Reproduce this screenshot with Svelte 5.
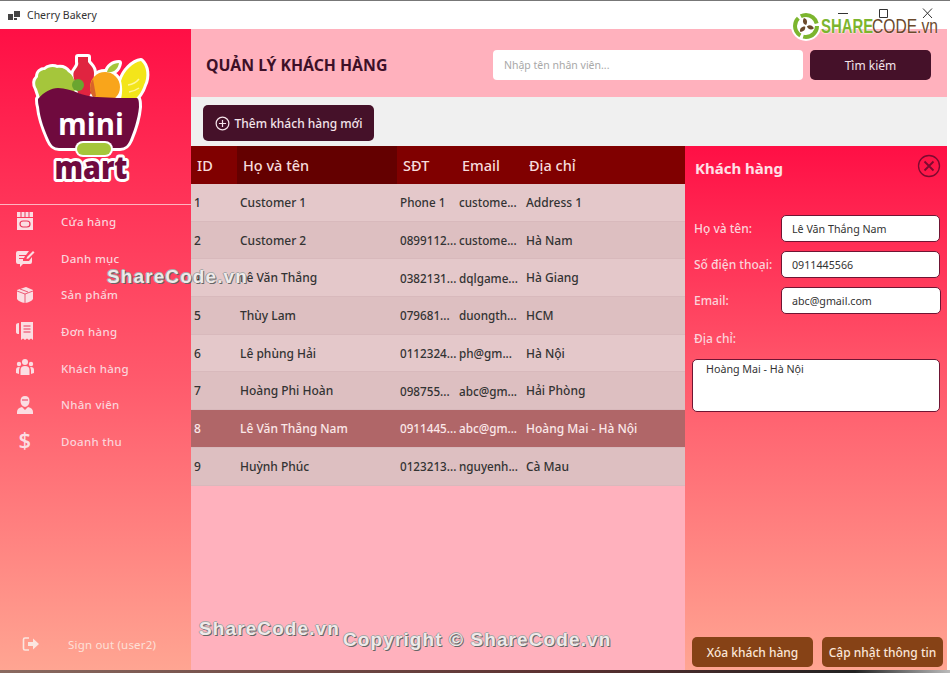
<script>
  const menu = [
    { label: "Cửa hàng", icon: "store" },
    { label: "Danh mục", icon: "edit" },
    { label: "Sản phẩm", icon: "box" },
    { label: "Đơn hàng", icon: "receipt" },
    { label: "Khách hàng", icon: "people" },
    { label: "Nhân viên", icon: "staff" },
    { label: "Doanh thu", icon: "dollar" }
  ];

  const customers = [
    ["1", "Customer 1", "Phone 1", "custome...", "Address 1"],
    ["2", "Customer 2", "0899112...", "custome...", "Hà Nam"],
    ["4", "Lê Văn Thắng", "0382131...", "dqlgame...", "Hà Giang"],
    ["5", "Thùy Lam", "079681...", "duongth...", "HCM"],
    ["6", "Lê phùng Hải", "0112324...", "ph@gm...", "Hà Nội"],
    ["7", "Hoàng Phi Hoàn", "098755...", "abc@gm...", "Hải Phòng"],
    ["8", "Lê Văn Thắng Nam", "0911445...", "abc@gm...", "Hoàng Mai - Hà Nội"],
    ["9", "Huỳnh Phúc", "0123213...", "nguyenh...", "Cà Mau"]
  ];
  const selectedId = "8";
  let address = "Hoàng Mai - Hà Nội";
</script>

<div class="window">
  <div class="titlebar">
    <div class="title">
      <svg width="13" height="11" viewBox="0 0 13 11"><path fill="#444" d="M0 4h5v6H0zM6 1h6v6H6zM6 8h3v2H6z" /></svg>
      <span>Cherry Bakery</span>
    </div>
    <div class="winbtns">
      <svg width="96" height="16" viewBox="0 0 96 16" fill="none" stroke="#333" stroke-width="1">
        <path d="M0 7.500h10" />
        <path d="M41.500 3.500h8v8h-8z" />
        <path d="M85 2.500l9 9.500M94 2.500l-9 9.500" />
      </svg>
    </div>
  </div>

  <div class="body">
    <aside class="sidebar">
      <div class="logo">
        <svg width="118" height="132" viewBox="0 0 118 132">
          <defs>
            <path id="lettuce" d="M5 36c-3-5-2-9 1-12 0-5 3-7 7-7 3-3 8-4 12-2 5-1 9 1 11 4 5 3 7 8 7 14l-1 10-20-2-14 4z" />
            <path id="bottle" d="M46 4h10v5c2 3 6 5 6 11 0 6-1 12-2 18l-4 8-10-6-4-14c-1-4-1-7 1-9 2-3 4-5 3-8z" />
            <circle id="orange" cx="73" cy="34" r="15" />
            <path id="leaf" d="M75 19c1-5 6-9 12-9-1 6-5 10-12 9z" />
            <path id="banana" d="M89 46c2-8 1-14 0-18 3-10 12-19 20-20 6 5 7 16 3 24-2 7-7 13-12 17z" />
            <path id="basket" d="M6 46c6-7 13-11 20-11 14 0 24 9 39 9 14 1 27 1 40 1 2 1 2 5 2 9-1 12-6 26-9 33-2 5-5 8-10 8H27c-5 0-8-3-10-8C13 78 8 66 7 54c-1-3-1-6-1-8z" />
          </defs>
          <g fill="#fff" stroke="#fff" stroke-width="6" stroke-linejoin="round">
            <use href="#lettuce" />
            <use href="#bottle" />
            <use href="#orange" />
            <use href="#leaf" />
            <use href="#banana" />
            <use href="#basket" />
          </g>
          <use href="#lettuce" fill="#a5c63b" />
          <use href="#bottle" fill="#e02440" />
          <circle cx="46" cy="32" r="6" fill="#6aa52f" />
          <use href="#orange" fill="#f9a51b" />
          <path d="M61 26a15 15 0 0 0 0 18l3-1z" fill="#d9642a" />
          <use href="#leaf" fill="#a5c63b" />
          <use href="#banana" fill="#f3e51a" />
          <path d="M96 32q7-1 11-6M97 39q6-1 10-4" fill="none" stroke="#fff59a" stroke-width="1.500" />
          <use href="#basket" fill="#6f0a3e" />
          <text x="59" y="82" textLength="66" lengthAdjust="spacingAndGlyphs" class="logo-mini">mini</text>
          <rect x="43" y="88" width="38" height="16" rx="8" fill="#fff" />
          <rect x="45" y="90" width="34" height="12" rx="6" fill="#a5c63b" />
          <text x="59" y="126" textLength="73" lengthAdjust="spacingAndGlyphs" class="logo-mart-edge">mart</text>
          <text x="59" y="126" textLength="73" lengthAdjust="spacingAndGlyphs" class="logo-mart">mart</text>
        </svg>
      </div>
      <hr />
      <nav>
        {#each menu as item}
          <div class="nav-item">
            <span class="nav-icon">
              <svg width="20" height="20" viewBox="0 0 20 20" fill="#fbdde2">
                {#if item.icon === "store"}
                  <path d="M2 1h16v5H2z" />
                  <path d="M2 7h16v12H2z" />
                  <rect x="5" y="10" width="10" height="6" rx="3" fill="none" stroke="#e9375a" stroke-width="1.200" />
                  <path d="M6 1v5M10 1v5M14 1v5" stroke="#e9375a" />
                {:else if item.icon === "edit"}
                  <path d="M1 5q0-2 2-2h11l-3 4H4v1h6L9 10H4v1h4v2h6l3-4v5q0 2-2 2H8l-3 3v-3H3q-2 0-2-2z" />
                  <path d="M12 9l6-6 1.500 1.500-6 6-2 .5z" />
                {:else if item.icon === "box"}
                  <path d="M2 5l9-3 7 3v9q-2 3-8 4-6-1-8-4z" />
                  <path d="M2 6l8 3v9M10 9l8-3M5 4l8 3" fill="none" stroke="#e9375a" stroke-width=".800" />
                {:else if item.icon === "receipt"}
                  <path d="M1 4q0-2 3-2v11q-3 0-3-2z" />
                  <path d="M6 1h12v18l-2-1.500-2 1.500-2-1.500-2 1.500-2-1.500-2 1.500z" />
                  <path d="M8.500 5h7M8.500 8h7M8.500 11h7" stroke="#e9375a" />
                {:else if item.icon === "people"}
                  <circle cx="10" cy="4" r="3" />
                  <circle cx="4" cy="6" r="2.200" />
                  <circle cx="16" cy="6" r="2.200" />
                  <path d="M5.500 17v-5q0-4 4.500-4t4.500 4v5z" />
                  <path d="M1 15v-3q0-3 3-3l1 .5q-1 1-1 3V16zM19 15v-3q0-3-3-3l-1 .5q1 1 1 3V16z" />
                {:else if item.icon === "staff"}
                  <path d="M10 1q4.500 0 4.500 5t-4.500 6q-4.500-1-4.500-6T10 1z" />
                  <path d="M2 19v-2q0-4 5-5l3 3 3-3q5 1 5 5v2z" />
                  <path d="M7 5h6" stroke="#e9375a" />
                {:else}
                  <text x="10" y="17" class="dollar">$</text>
                {/if}
              </svg>
            </span>
            <span>{item.label}</span>
          </div>
        {/each}
      </nav>
      <div class="signout">
        <svg width="18" height="16" viewBox="0 0 18 16" fill="none">
          <path d="M7 2H3q-1.500 0-1.500 1.500v9Q1.500 14 3 14h4" stroke="#fbe6e0" stroke-width="1.600" />
          <path fill="#fbe6e0" d="M6 6h5V2.500L17 8l-6 5.500V10H6z" />
        </svg>
        <span>Sign out (user2)</span>
      </div>
    </aside>

    <main class="content">
      <header class="head">
        <h1>QUẢN LÝ KHÁCH HÀNG</h1>
        <div class="search">
          <input placeholder="Nhập tên nhân viên..." />
          <button class="dark search-btn">Tìm kiếm</button>
        </div>
      </header>

      <div class="toolbar">
        <button class="dark add-btn">
          <svg width="15" height="15" viewBox="0 0 16 16" fill="none" stroke="#f5e4ea" stroke-width="1.300">
            <circle cx="8" cy="8" r="6.800" />
            <path d="M8 4.200v7.600M4.200 8h7.600" />
          </svg>
          Thêm khách hàng mới
        </button>
      </div>

      <div class="split">
        <section class="table">
          <div class="row thead">
            <div>ID</div>
            <div class="dark-col">Họ và tên</div>
            <div>SĐT</div>
            <div>Email</div>
            <div>Địa chỉ</div>
          </div>
          {#each customers as c, i}
            <div class="row tr" class:alt={i % 2 === 1} class:selected={c[0] === selectedId}>
              {#each c as cell}
                <div>{cell}</div>
              {/each}
            </div>
          {/each}
        </section>

        <section class="detail">
          <div class="detail-head">
            <h2>Khách hàng</h2>
            <svg width="24" height="24" viewBox="0 0 24 24" fill="none" stroke="#7d0a30" stroke-width="1.300">
              <circle cx="12" cy="12" r="10.500" />
              <path d="M7.500 7.500l9 9M16.500 7.500l-9 9" stroke-width="1.800" />
            </svg>
          </div>
          <div class="form">
            <label for="name">Họ và tên:</label>
            <input id="name" value="Lê Văn Thắng Nam" />
            <label for="phone">Số điện thoại:</label>
            <input id="phone" value="0911445566" />
            <label for="email">Email:</label>
            <input id="email" class="wide" value="abc@gmail.com" />
          </div>
          <label class="addr-label" for="addr">Địa chỉ:</label>
          <textarea id="addr" bind:value={address}></textarea>
          <div class="actions">
            <button class="brown">Xóa khách hàng</button>
            <button class="brown">Cập nhật thông tin</button>
          </div>
        </section>
      </div>
    </main>
    <div class="rightgap"></div>
  </div>

  <div class="bottomline"></div>

  <!-- stamped over the screenshot -->
  <div class="brand">
    <svg width="30" height="30" viewBox="0 0 30 30">
      <circle cx="15" cy="15" r="15" fill="#fff" />
      <circle cx="15" cy="15" r="11" fill="none" stroke="#7cb52e" stroke-width="4" stroke-dasharray="20 3.040" />
      <g fill="#6b4a2c">
        <path d="M15 14c-3-1-4-4-2-7 3 1 4 4 2 7z" />
        <path d="M15 14c-3-1-4-4-2-7 3 1 4 4 2 7z" transform="rotate(120 15 15)" />
        <path d="M15 14c-3-1-4-4-2-7 3 1 4 4 2 7z" transform="rotate(240 15 15)" />
      </g>
    </svg>
    <span class="b-green">SHARE</span><span class="b-brown">CODE.vn</span>
  </div>
  <div class="wm wm1">ShareCode.vn</div>
  <div class="wm wm2">ShareCode.vn</div>
  <div class="wm wm3">Copyright © ShareCode.vn</div>
</div>

<style>
  :global(body) {
    margin: 0;
    background: #fff;
  }

  .window {
    position: relative;
    width: 950px;
    height: 673px;
    overflow: hidden;
    display: flex;
    flex-direction: column;
    background: #fff;
    font-family: "Noto Sans", "Open Sans", sans-serif;
    font-size: 12px;
    box-sizing: border-box;
    border-top: 1px solid #777;
  }

  .titlebar {
    height: 28px;
    flex: none;
    display: flex;
    align-items: center;
    justify-content: space-between;
    padding: 0 16px 0 8px;
  }
  .title {
    display: flex;
    align-items: center;
    gap: 6px;
    font-size: 10.500px;
    color: #333;
  }
  .winbtns {
    display: flex;
    padding-bottom: 2px;
  }

  .body {
    flex: 1;
    display: flex;
    min-height: 0;
  }

  .sidebar {
    width: 191px;
    flex: none;
    display: flex;
    flex-direction: column;
    background: linear-gradient(180deg, #ff0f45 0%, #ff5a6c 55%, #ffa592 100%);
  }
  .logo {
    height: 175px;
    flex: none;
    padding: 24px 0 0 32px;
    box-sizing: border-box;
  }
  .logo svg {
    display: block;
    overflow: visible;
  }
  .logo-mini {
    font: 700 31px "Open Sans", sans-serif;
    fill: #fff;
    text-anchor: middle;
  }
  .logo-mart,
  .logo-mart-edge {
    font: 800 32px "Open Sans", sans-serif;
    text-anchor: middle;
  }
  .logo-mart {
    fill: #6f0a3e;
  }
  .logo-mart-edge {
    fill: #fff;
    stroke: #fff;
    stroke-width: 6px;
    stroke-linejoin: round;
  }
  hr {
    margin: 0;
    border: 0;
    height: 1px;
    background: #ffb4c0;
    flex: none;
  }
  nav {
    display: flex;
    flex-direction: column;
    margin-top: -2px;
  }
  .nav-item {
    height: 36.700px;
    display: flex;
    align-items: center;
    color: #fbd3da;
    font-weight: 500;
    font-size: 11.500px;
    letter-spacing: 0.300px;
  }
  .nav-icon {
    width: 61px;
    padding-left: 15px;
    box-sizing: border-box;
    display: flex;
    flex: none;
  }
  .nav-icon svg {
    overflow: visible;
  }
  .dollar {
    font: 600 22px "Open Sans", sans-serif;
    text-anchor: middle;
    fill: #fbdde2;
  }
  .signout {
    margin-top: auto;
    height: 52px;
    display: flex;
    align-items: center;
    gap: 28px;
    padding-left: 22px;
    color: #fde0d8;
    font-size: 11.500px;
    letter-spacing: 0.200px;
    box-sizing: border-box;
  }

  .content {
    flex: 1;
    min-width: 0;
    display: flex;
    flex-direction: column;
    background: #ffb1bd;
  }
  .head {
    height: 68px;
    flex: none;
    display: flex;
    align-items: center;
    justify-content: space-between;
    padding: 4px 16px 0 15px;
    box-sizing: border-box;
    background: #ffb1bd;
  }
  h1 {
    margin: 0;
    font-size: 15.800px;
    font-weight: 700;
    color: #3d1028;
  }
  .search {
    display: flex;
    gap: 7px;
  }
  .search input {
    width: 310px;
    height: 30px;
    box-sizing: border-box;
    border: 0;
    border-radius: 4px;
    padding: 0 11px;
    background: #fff;
    font: 10.500px "Noto Sans", sans-serif;
  }
  .search input::placeholder {
    color: #a8a8a8;
  }
  button {
    border: 0;
    font-family: inherit;
    cursor: pointer;
  }
  .dark {
    background: #451129;
    color: #f3e4ea;
    border-radius: 5px;
  }
  .search-btn {
    width: 121px;
    height: 30px;
    font-size: 12px;
  }
  .toolbar {
    height: 49px;
    flex: none;
    background: #f0f0f0;
    display: flex;
    align-items: center;
    padding: 3px 0 0 12px;
    box-sizing: border-box;
  }
  .add-btn {
    height: 36px;
    width: 171px;
    display: flex;
    align-items: center;
    justify-content: center;
    gap: 5px;
    font-size: 12px;
    font-weight: 500;
  }

  .split {
    flex: 1;
    min-height: 0;
    display: flex;
  }
  .table {
    width: 494px;
    flex: none;
  }
  .row {
    display: grid;
    grid-template-columns: 46px 160px 59px 67px 1fr;
  }
  .thead {
    height: 38px;
    background: #800000;
    color: #f6dcdc;
    font-size: 14.500px;
    font-weight: 500;
    align-items: stretch;
  }
  .thead > div {
    display: flex;
    align-items: center;
    padding-left: 6px;
  }
  .thead .dark-col {
    background: #640000;
  }
  .tr {
    height: 37.700px;
    align-items: center;
    background: #e4c8ca;
    color: #333;
    font-size: 12px;
    font-weight: 500;
    border-bottom: 1px solid #d8b9bc;
    box-sizing: border-box;
  }
  .tr > div {
    padding-left: 3px;
    white-space: nowrap;
  }
  .tr > div:nth-child(3),
  .tr > div:nth-child(4) {
    font-size: 11.700px;
  }
  .tr.alt {
    background: #ddbfc1;
  }
  .tr.selected {
    background: #b06668;
    color: #fbe8e8;
  }

  .detail {
    flex: 1;
    min-width: 0;
    display: flex;
    flex-direction: column;
    padding: 0 7px 3px 7px;
    box-sizing: border-box;
    background: linear-gradient(180deg, #ff0f45 0%, #ff5a6c 45%, #ffa592 100%);
    color: #fbd3da;
  }
  .detail-head {
    height: 44px;
    flex: none;
    display: flex;
    align-items: center;
    justify-content: space-between;
    padding: 0 0 0 3px;
  }
  .detail-head svg {
    margin: 0 -1px 4px 0;
  }
  h2 {
    margin: 0;
    font-size: 15px;
    font-weight: 700;
    color: #fde0e6;
  }
  .form {
    display: grid;
    grid-template-columns: 87px 160px;
    row-gap: 9px;
    align-items: center;
    margin-top: 25px;
    padding-left: 2px;
  }
  .form input {
    height: 27px;
    width: 159px;
    box-sizing: border-box;
    border: 1px solid #6f1533;
    border-radius: 5px;
    padding: 0 10px;
    background: #fff;
    color: #333;
    font: 10.700px "Noto Sans", sans-serif;
  }
  .form input.wide {
    width: 160px;
  }
  label {
    font-size: 12px;
    font-weight: 500;
  }
  .addr-label {
    margin: 16px 0 0 2px;
  }
  textarea {
    display: block;
    margin-top: 12px;
    width: 248px;
    height: 53px;
    box-sizing: border-box;
    border: 1px solid #6f1533;
    border-radius: 5px;
    padding: 2px 13px;
    resize: none;
    overflow: hidden;
    background: #fff;
    color: #333;
    font: 10.700px "Noto Sans", sans-serif;
  }
  .actions {
    margin-top: auto;
    display: flex;
    justify-content: space-between;
    margin-right: -3px;
  }
  .brown {
    height: 30px;
    width: 121px;
    border-radius: 5px;
    background: #864216;
    color: #fbe6d8;
    font-size: 12px;
    font-weight: 500;
    padding: 0;
    white-space: nowrap;
  }

  .rightgap {
    width: 3px;
    flex: none;
    background: #fff;
  }
  .bottomline {
    height: 3px;
    flex: none;
    background: linear-gradient(90deg, #8a6a60, #5a3030 60%, #222 90%, #bbb 100%);
  }

  .brand {
    position: absolute;
    left: 791px;
    top: 10px;
    display: flex;
    align-items: center;
    font: 20px "Liberation Sans", sans-serif;
  }
  .b-green {
    width: 51px;
    color: #7cb52e;
    font-weight: 700;
    font-size: 21px;
    transform: scaleX(0.71);
    transform-origin: left;
    text-shadow: 0 0 2px #fff, 0 0 2px #fff;
  }
  .b-brown {
    color: #6b4a2c;
    font-size: 20px;
    transform: scaleX(0.78);
    transform-origin: left;
    text-shadow: 0 0 2px #fff;
  }
  .wm {
    position: absolute;
    font: 700 19px "Liberation Sans", sans-serif;
    letter-spacing: 1.100px;
    color: #eeeaea;
    text-shadow: 1px 1px 0 #666, -1px 0 0 #999, 0 -1px 0 #aaa;
    white-space: nowrap;
  }
  .wm1 {
    left: 107px;
    top: 265px;
  }
  .wm2 {
    left: 199px;
    top: 617px;
  }
  .wm3 {
    left: 343px;
    top: 628px;
  }
</style>
